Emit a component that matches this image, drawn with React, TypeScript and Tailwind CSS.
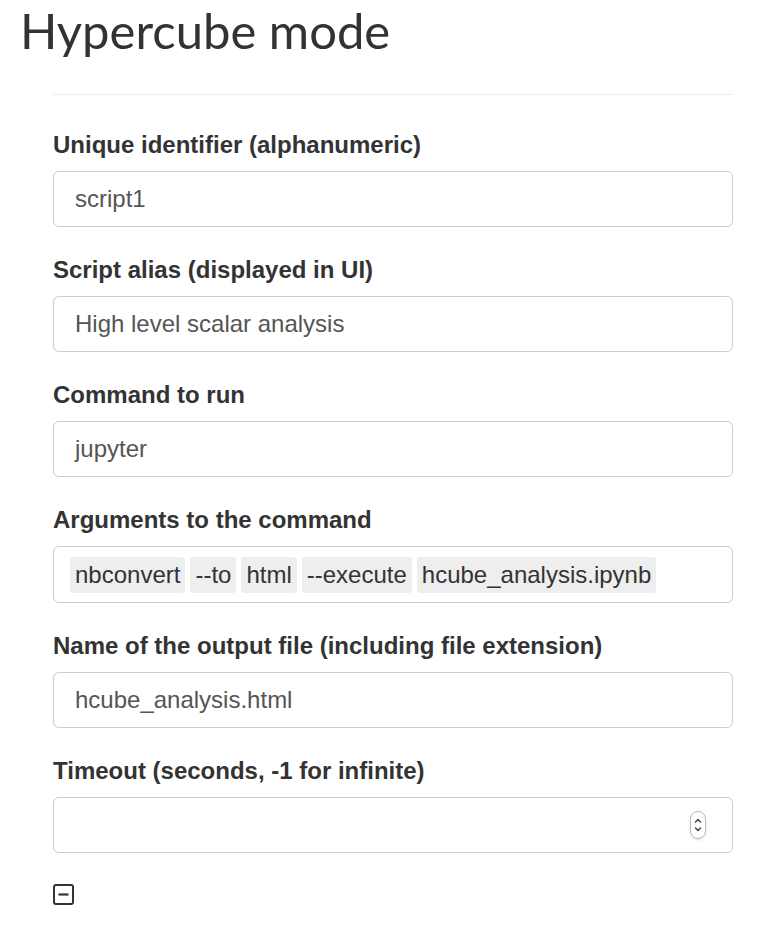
import React from 'react';

const labelCls = "block text-[24px] font-bold text-[#333] leading-[28px] mb-[12px]";
const inputCls = "w-full h-[56px] border border-[#ccc] rounded-[6px] px-[21px] flex items-center text-[24px] text-[#555] bg-white";

const Field = ({ label, value }: { label: string; value: string }) => (
    <div className="mb-[29px]">
        <label className={labelCls}>{label}</label>
        <div className={inputCls}>{value}</div>
    </div>
);

export default function App() {
    const args = ["nbconvert", "--to", "html", "--execute", "hcube_analysis.ipynb"];
    return (
        <div className="w-[778px] h-[946px] bg-white font-['Liberation_Sans',Arial,sans-serif]">
            <h1 className="pl-[20px] pt-[2px] text-[49px] leading-[56px] text-[#333] font-['Lato','Open_Sans',sans-serif]">
                Hypercube mode
            </h1>
            <div className="ml-[53px] mr-[45px] mt-[36px]">
                <hr className="border-0 border-t border-[#eee] mb-[36px]" />
                <Field label="Unique identifier (alphanumeric)" value="script1" />
                <Field label="Script alias (displayed in UI)" value="High level scalar analysis" />
                <Field label="Command to run" value="jupyter" />
                <div className="mb-[29px]">
                    <label className={labelCls}>Arguments to the command</label>
                    <div className="w-full h-[57px] border border-[#ccc] rounded-[6px] px-[16px] flex items-center gap-[5px] text-[24px] text-[#333] bg-white">
                        {args.map((a) => (
                            <span key={a} className="bg-[#eee] rounded-[3px] h-[36px] px-[5px] flex items-center">{a}</span>
                        ))}
                    </div>
                </div>
                <Field label="Name of the output file (including file extension)" value="hcube_analysis.html" />
                <div className="mb-[31px]">
                    <label className={labelCls}>Timeout (seconds, -1 for infinite)</label>
                    <div className="w-full h-[56px] border border-[#ccc] rounded-[6px] px-[21px] flex items-center justify-end bg-white">
                        <div className="w-[16px] h-[28px] rounded-full border border-[#bbb] shadow-sm flex flex-col items-center justify-center mr-[5px]">
                            <svg width="10" height="22" viewBox="0 0 10 22" fill="none" stroke="#444" strokeWidth="1.5" strokeLinecap="round">
                                <path d="M2.5 8 L5 5.5 L7.5 8" />
                                <path d="M2.5 14 L5 16.5 L7.5 14" />
                            </svg>
                        </div>
                    </div>
                </div>
                <svg width="21" height="21" viewBox="0 0 21 21" fill="none">
                    <rect x="1" y="1" width="19" height="19" rx="2" stroke="#333" strokeWidth="2" />
                    <path d="M5.5 10.5 H15.5" stroke="#333" strokeWidth="2.2" />
                </svg>
            </div>
        </div>
    );
}
